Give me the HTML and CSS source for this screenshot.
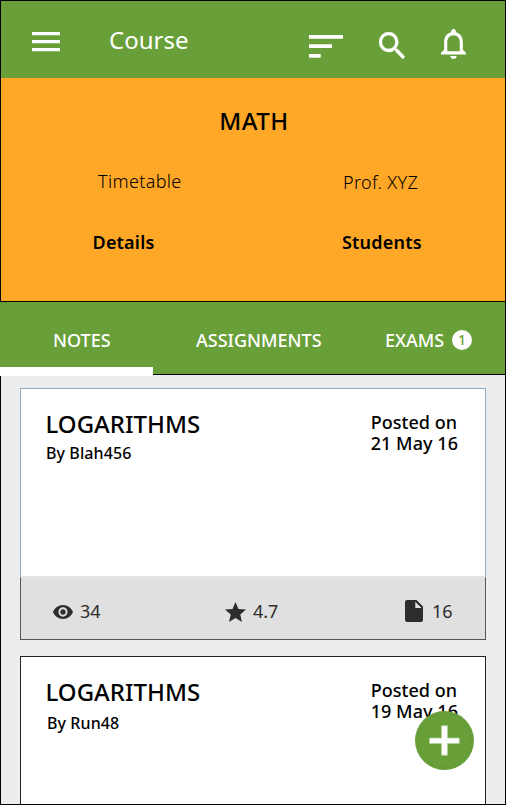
FILE: index.html
```
<!DOCTYPE html>
<html lang="en">
<head>
<meta charset="utf-8">
<title>Course</title>
<link rel="stylesheet" href="styles.css">
</head>
<body>
<div class="app">
  <header class="topbar">
    <svg class="icon-menu" width="28" height="20" viewBox="0 0 28 20"><path d="M0 0h28v3.200H0zM0 8h28v3.200H0zM0 16h28v3.200H0z"/></svg>
    <h1 class="screen-title">Course</h1>
    <svg class="icon-sort" width="34" height="24" viewBox="0 0 34 24"><path d="M0 0h34v3.700H0zM0 9.200h23v3.800H0zM0 19h11.700v3.700H0z"/></svg>
    <svg class="icon-search" width="26" height="27" viewBox="3 3 17.5 17.5" preserveAspectRatio="none"><path stroke="#fff" stroke-width="0.3" d="M15.5 14h-.79l-.28-.27A6.471 6.471 0 0 0 16 9.500 6.500 6.500 0 1 0 9.500 16c1.610 0 3.090-.590 4.230-1.570l.270.280v.790l5 4.990L20.490 19l-4.990-5zm-6 0C7.010 14 5 11.990 5 9.500S7.010 5 9.500 5 14 7.010 14 9.500 11.990 14 9.500 14z"/></svg>
    <svg class="icon-bell" width="25" height="30" viewBox="4 2.500 16 19.500" preserveAspectRatio="none"><path d="M12 22c1.100 0 2-.9 2-2h-4c0 1.100.9 2 2 2zm6-6v-5c0-3.070-1.630-5.640-4.500-6.320V4c0-.83-.67-1.500-1.500-1.500s-1.500.67-1.500 1.500v.68C7.640 5.360 6 7.920 6 11v5l-2 2v1h16v-1l-2-2zm-2 1H8v-6c0-2.480 1.510-4.500 4-4.500s4 2.020 4 4.500v6z"/></svg>
  </header>

  <section class="course">
    <h2 class="course-name">MATH</h2>
    <div class="course-grid">
      <span class="info timetable">Timetable</span>
      <span class="info professor">Prof. XYZ</span>
      <span class="link details">Details</span>
      <span class="link students">Students</span>
    </div>
  </section>

  <nav class="tabs">
    <span class="tab tab-notes">NOTES</span>
    <span class="tab tab-assignments">ASSIGNMENTS</span>
    <span class="tab tab-exams">EXAMS</span>
    <span class="count">1</span>
    <span class="indicator"></span>
  </nav>

  <main class="feed">
    <article class="card card-first">
      <div class="card-body">
        <div>
          <h3 class="topic">LOGARITHMS</h3>
          <p class="author">By Blah456</p>
        </div>
        <p class="posted">Posted on<br>21 May 16</p>
      </div>
      <footer class="stats">
        <span class="stat">
          <svg class="icon-eye" width="20" height="14" viewBox="1 4.500 22 15" preserveAspectRatio="none"><path d="M12 4.500C7 4.500 2.730 7.610 1 12c1.730 4.390 6 7.500 11 7.500s9.270-3.110 11-7.500c-1.730-4.390-6-7.500-11-7.500zM12 17c-2.760 0-5-2.240-5-5s2.240-5 5-5 5 2.240 5 5-2.240 5-5 5zm0-8c-1.660 0-3 1.340-3 3s1.340 3 3 3 3-1.340 3-3-1.340-3-3-3z"/></svg>
          34
        </span>
        <span class="stat stat-rating">
          <svg class="icon-star" width="21" height="20" viewBox="2 2 20 19" preserveAspectRatio="none"><path d="M12 17.270 18.180 21l-1.640-7.030L22 9.240l-7.190-.61L12 2 9.190 8.630 2 9.240l5.460 4.730L5.820 21z"/></svg>
          4.7
        </span>
        <span class="stat stat-files">
          <svg class="icon-file" width="18" height="22" viewBox="0 0 18 22"><path d="M2 0h9.500L18 6.500V20a2 2 0 0 1-2 2H2a2 2 0 0 1-2-2V2a2 2 0 0 1 2-2zm8.300 1.700V8h6.200z"/></svg>
          16
        </span>
      </footer>
    </article>

    <article class="card card-second">
      <div class="card-body">
        <div>
          <h3 class="topic">LOGARITHMS</h3>
          <p class="author">By Run48</p>
        </div>
        <p class="posted">Posted on<br>19 May 16</p>
      </div>
    </article>
  </main>

  <button class="add" aria-label="Add note">
    <svg width="60" height="60" viewBox="0 0 60 60"><circle cx="30" cy="30" r="27" fill="none" stroke="#5f9236" stroke-width="0.6" stroke-dasharray="4 2"/><path d="M27 15h6v12.500h12v5.500H33v12h-6V33H14.700v-5.500H27z" fill="#fff" stroke="#b5cf9e" stroke-width="0.8"/></svg>
  </button>
</div>
</body>
</html>
```
FILE: styles.css
```
* { box-sizing: border-box; }

body {
  margin: 0;
  font-family: "Noto Sans", sans-serif;
  color: #000;
}

h1, h2, h3, p { margin: 0; font-weight: 400; }

svg { display: block; flex: none; }

.app {
  position: relative;
  width: 506px;
  height: 805px;
  border: 1px solid #000;
  background: #ededed;
  display: flex;
  flex-direction: column;
}

.topbar {
  flex: none;
  height: 77px;
  padding-left: 31px;
  display: flex;
  align-items: flex-start;
  background: #689f38;
  color: #fff;
  fill: #fff;
}

.icon-menu { margin-top: 31px; }
.screen-title {
  width: 120px;
  margin: 24px 0 0 49px;
  font-size: 24px;
  line-height: 30px;
}
.icon-sort { margin: 34px 0 0 80px; }
.icon-search { margin: 31px 0 0 36px; }
.icon-bell { margin: 28px 0 0 36px; }

.course {
  flex: none;
  height: 224px;
  padding-top: 28px;
  background: #ffa726;
  border-bottom: 1px solid #000;
}
.course-name {
  padding-left: 2px;
  font-size: 24px;
  font-weight: 500;
  letter-spacing: 0.5px;
  line-height: 30px;
  text-align: center;
}
.course-grid {
  display: grid;
  grid-template-columns: 249px 1fr;
  row-gap: 37px;
  margin-top: 33px;
  padding-left: 92px;
  font-size: 18px;
  line-height: 24px;
}
.info { font-weight: 300; letter-spacing: 0.35px; }
.link { font-weight: 600; letter-spacing: 0.2px; }
.details { margin-left: -0.5px; }
.timetable { padding-left: 5px; }
.professor { padding: 1px 0 0 1px; margin-bottom: -1px; }

.tabs {
  position: relative;
  flex: none;
  height: 73px;
  margin-left: -1px;
  padding: 26px 0 0 53px;
  display: flex;
  align-items: flex-start;
  background: #689f38;
  border-bottom: 1px solid #000;
  color: #fff;
  font-size: 18px;
  font-weight: 500;
  line-height: 24px;
}
.tab-notes { width: 143px; }
.tab-assignments { width: 189px; }
.tab-exams { width: 67px; }
.count {
  width: 20px;
  height: 20px;
  margin-top: 2px;
  border-radius: 50%;
  background: #fff;
  color: #689f38;
  font-size: 14px;
  line-height: 20px;
  text-align: center;
}
.indicator {
  position: absolute;
  left: 0;
  bottom: -2px;
  width: 153px;
  height: 9px;
  background: #fff;
}

.feed {
  flex: 1;
  min-height: 0;
  padding: 13px 19px 0;
}
.card { background: #fff; }
.card-first { height: 252px; }
.card-first .card-body {
  height: 188px;
  border: 1px solid #8fabc1;
  border-bottom: 0;
}
.card-second {
  height: 148px;
  margin-top: 16px;
  border: 1px solid #222;
  border-bottom: 0;
}
.card-body {
  display: flex;
  justify-content: space-between;
  padding: 20px 27px 0 25px;
}
.topic {
  margin-left: -0.5px;
  font-size: 24px;
  font-weight: 500;
  line-height: 30px;
}
.author {
  margin-top: 3px;
  font-size: 16px;
  font-weight: 500;
  letter-spacing: 0.1px;
  line-height: 22px;
}
.card-second .author { margin-top: 5px; padding-left: 1px; }
.posted {
  margin-top: 3px;
  font-size: 18px;
  font-weight: 500;
  letter-spacing: 0.05px;
  line-height: 21px;
}

.stats {
  display: flex;
  align-items: flex-start;
  height: 64px;
  padding: 21px 0 0 32px;
  background: #e0e0e0;
  border: 1px solid #555;
  border-top: 2px solid #e4e4e4;
  color: #2d2d2d;
  fill: #2d2d2d;
  font-size: 18px;
  line-height: 24px;
}
.stat { display: flex; width: 171px; }
.stat-rating { width: 180px; }
.stat-files { width: 60px; }
.icon-eye { margin: 6px 7px 0 0; }
.icon-star { margin: 3px 7px 0 1px; }
.icon-file { margin: 1px 9px 0 1px; }

.add {
  position: absolute;
  left: 414px;
  top: 710px;
  width: 59px;
  height: 59px;
  padding: 0;
  border: 0;
  border-radius: 50%;
  background: #689f38;
}
.add svg { width: 59px; height: 59px; }
```
